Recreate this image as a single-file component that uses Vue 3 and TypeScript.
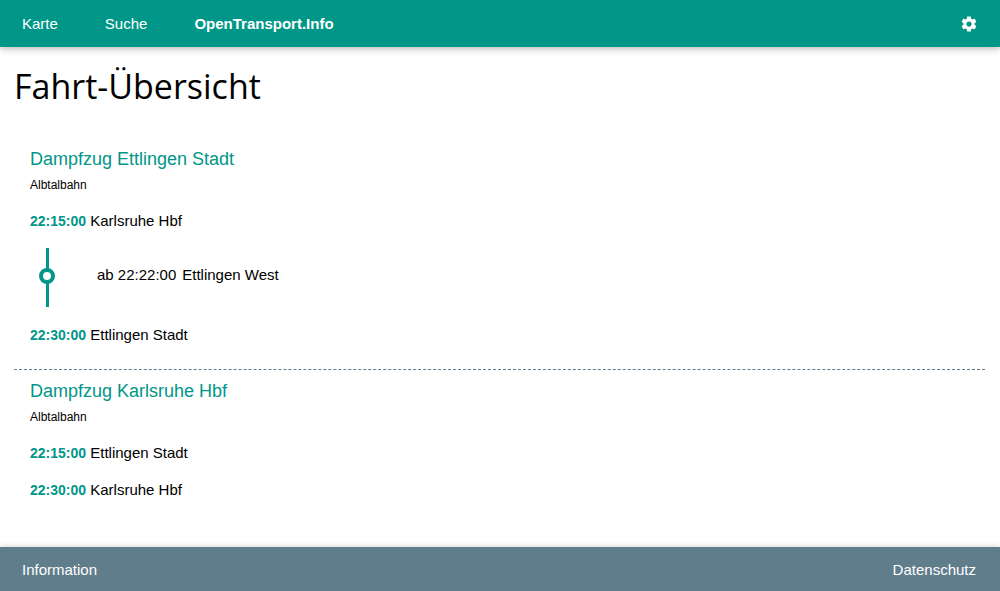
<script setup lang="ts">
interface Stop {
  time: string
  name: string
}

interface Trip {
  id: number
  title: string
  operator: string
  start: Stop
  via: Stop[]
  end: Stop
}

const trips: Trip[] = [
  {
    id: 1,
    title: 'Dampfzug Ettlingen Stadt',
    operator: 'Albtalbahn',
    start: { time: '22:15:00', name: 'Karlsruhe Hbf' },
    via: [{ time: '22:22:00', name: 'Ettlingen West' }],
    end: { time: '22:30:00', name: 'Ettlingen Stadt' },
  },
  {
    id: 2,
    title: 'Dampfzug Karlsruhe Hbf',
    operator: 'Albtalbahn',
    start: { time: '22:15:00', name: 'Ettlingen Stadt' },
    via: [],
    end: { time: '22:30:00', name: 'Karlsruhe Hbf' },
  },
]
</script>

<template>
  <div class="page">
    <header class="topbar">
      <nav class="nav">
        <a href="#karte">Karte</a>
        <a href="#suche">Suche</a>
        <a href="#start" class="brand">OpenTransport.Info</a>
      </nav>
      <button type="button" class="settings" aria-label="Einstellungen">
        <svg viewBox="0 0 24 24" width="18" height="18" aria-hidden="true">
          <path
            fill="currentColor"
            d="M19.43 12.98c.04-.32.07-.64.07-.98s-.03-.66-.07-.98l2.11-1.65c.19-.15.24-.42.12-.64l-2-3.46c-.12-.22-.39-.3-.61-.22l-2.49 1c-.52-.4-1.08-.73-1.69-.98l-.38-2.65C14.46 2.18 14.25 2 14 2h-4c-.25 0-.46.18-.49.42l-.38 2.65c-.61.25-1.17.59-1.69.98l-2.49-1c-.23-.09-.49 0-.61.22l-2 3.46c-.13.22-.07.49.12.64l2.11 1.65c-.04.32-.07.65-.07.98s.03.66.07.98l-2.11 1.65c-.19.15-.24.42-.12.64l2 3.46c.12.22.39.3.61.22l2.49-1c.52.4 1.08.73 1.69.98l.38 2.65c.03.24.24.42.49.42h4c.25 0 .46-.18.49-.42l.38-2.65c.61-.25 1.17-.59 1.69-.98l2.49 1c.23.09.49 0 .61-.22l2-3.46c.12-.22.07-.49-.12-.64l-2.11-1.65zM12 15.5c-1.93 0-3.5-1.57-3.5-3.5s1.57-3.5 3.5-3.5 3.5 1.57 3.5 3.5-1.57 3.5-3.5 3.5z"
          />
        </svg>
      </button>
    </header>

    <main class="content">
      <h1>Fahrt-Übersicht</h1>
      <ul class="trips">
        <li v-for="trip in trips" :key="trip.id" class="trip">
          <h2>{{ trip.title }}</h2>
          <p class="operator">{{ trip.operator }}</p>
          <p class="stop"><b>{{ trip.start.time }}</b> {{ trip.start.name }}</p>
          <ol v-if="trip.via.length" class="via">
            <li v-for="stop in trip.via" :key="stop.name">
              <svg class="marker" viewBox="0 0 18 59" width="18" height="59" aria-hidden="true">
                <path d="M8 0h3v59H8z" fill="#009688" />
                <circle cx="9" cy="28" r="6" fill="#fff" stroke="#009688" stroke-width="4" />
              </svg>
              <p class="departure">
                <span>ab {{ stop.time }}</span>
                <span>{{ stop.name }}</span>
              </p>
            </li>
          </ol>
          <p class="stop"><b>{{ trip.end.time }}</b> {{ trip.end.name }}</p>
        </li>
      </ul>
    </main>

    <footer class="footer">
      <a href="#information">Information</a>
      <a href="#datenschutz">Datenschutz</a>
    </footer>
  </div>
</template>

<style>
body {
  margin: 0;
  background: #fff;
}
</style>

<style scoped>
.page {
  display: flex;
  flex-direction: column;
  min-height: 100vh;
  color: #000;
  font: 15px/23px "Liberation Sans", Arial, sans-serif;
}

h1,
h2,
p,
ul,
ol {
  margin: 0;
  padding: 0;
  font-weight: 400;
  list-style: none;
}

a {
  color: #fff;
  text-decoration: none;
}

.topbar,
.footer {
  display: flex;
  align-items: center;
  justify-content: space-between;
  padding: 12px 24px 12px 22px;
}

.topbar {
  background: #009688;
  box-shadow: 0 2px 5px rgba(0, 0, 0, 0.16), 0 2px 10px rgba(0, 0, 0, 0.12);
}

.nav {
  display: flex;
  gap: 47px;
}

.brand {
  font-weight: 700;
}

.settings {
  display: flex;
  margin-right: -2px;
  padding: 0;
  border: 0;
  background: none;
  color: #fff;
  cursor: pointer;
}

.content {
  flex: 1;
  padding: 12px 15px 23px 14px;
}

h1 {
  font: 34px/54px "Open Sans", "Noto Sans", sans-serif;
}

.trips {
  margin-top: 25px;
}

.trip {
  padding: 8px 16px 23px;
}

.trip + .trip {
  border-top: 1px dashed #607d8b;
}

h2 {
  color: #009688;
  font-size: 18px;
  line-height: 27px;
}

.operator {
  margin: 3px 0 15px;
  font-size: 12px;
  line-height: 18px;
}

.stop + .stop {
  margin-top: 14px;
}

.stop b {
  color: #009688;
  font-size: 14px;
  line-height: 1;
}

.via {
  margin: 16px 0;
}

.via li {
  display: flex;
  align-items: center;
}

.marker {
  margin: 0 41px 0 8px;
}

.departure {
  display: flex;
  gap: 6px;
  padding-bottom: 6px;
}

.footer {
  padding-top: 11px;
  padding-bottom: 10px;
  background: #607d8b;
  box-shadow: 0 0 6px rgba(0, 0, 0, 0.2);
}
</style>
